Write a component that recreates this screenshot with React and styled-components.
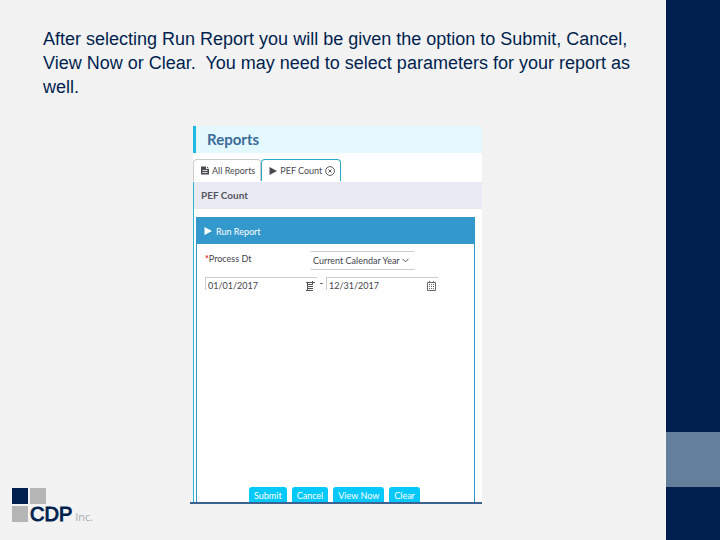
import React, { useState } from 'react'
import styled, { createGlobalStyle } from 'styled-components'

const GlobalStyle = createGlobalStyle`
  * {
    box-sizing: border-box;
  }
  body {
    margin: 0;
    background: #f2f2f2;
    font-family: Lato, sans-serif;
  }
`

const Slide = styled.div`
  display: flex;
  min-height: 100vh;
`

const Main = styled.main`
  flex: 1;
  display: flex;
  flex-direction: column;
  padding: 27px 12px 18px;
  background-image:
    repeating-linear-gradient(90deg, #ffffff18 0 1px, transparent 1px 4px),
    repeating-linear-gradient(#ffffff18 0 1px, transparent 1px 4px);
`

const Sidebar = styled.aside`
  width: 54px;
  display: flex;
  flex-direction: column;
  background: #001f4f;
`

const Band = styled.div`
  height: 55px;
  margin-top: 80vh;
  background: #647f9b;
`

const Title = styled.h1`
  margin: 0 0 27px 31px;
  font-family: 'Liberation Sans', sans-serif;
  font-size: 18px;
  font-weight: normal;
  line-height: 24px;
  color: #001f4f;
`

const Body = styled.div`
  flex: 1;
  display: grid;
  grid-template-columns: 178px minmax(292px, 45%);
`

const Shot = styled.section`
  align-self: start;
  padding-left: 3px;
  border-bottom: 2px solid #3b6290;
`

const Screen = styled.div`
  background: white;
`

const ScreenTitle = styled.h2`
  margin: 0;
  padding-left: 11px;
  border-left: 3px solid #1fb9e6;
  background: #e4f8ff;
  font-size: 15px;
  line-height: 27px;
  color: #3a6c98;
`

const Tabs = styled.div`
  display: flex;
  height: 29px;
  padding-top: 6px;
`

const Tab = styled.button`
  display: flex;
  align-items: center;
  gap: 3px;
  height: 22px;
  padding: 0 5px 0 7px;
  border: 1px solid ${props => props.$active ? '#2aa9cb' : '#cccccc'};
  border-bottom: none;
  border-radius: 4px 4px 0 0;
  background: white;
  font: 9px Lato, sans-serif;
  color: #4a4a52;
  white-space: nowrap;
`

const Content = styled.div`
  border-left: 1px solid #2fb4d2;
`

const SubTitle = styled.h3`
  margin: 0;
  padding-left: 7px;
  background: #eaeaf4;
  font-size: 10px;
  line-height: 27px;
  color: #55555d;
`

const RunBox = styled.form`
  display: flex;
  flex-direction: column;
  height: 285px;
  margin: 8px 7px 0 2px;
  border: 1px solid #3399cc;
  border-bottom: none;
`

const RunHeader = styled.div`
  display: flex;
  align-items: center;
  gap: 4px;
  height: 26px;
  padding: 0 7px;
  background: #3399cc;
  font-size: 9px;
  color: white;
`

const Row = styled.div`
  display: flex;
  margin-top: 7px;
  padding-left: 8px;
`

const Label = styled.label`
  width: 105px;
  font-size: 9px;
  line-height: 16px;
  color: #44444c;
`

const Required = styled.span`
  font-weight: bold;
  color: #dd2222;
`

const SelectWrapper = styled.div`
  display: flex;
  align-items: center;
  width: 105px;
  height: 19px;
  border-top: 1px solid #cccccc;
  border-bottom: 1px solid #cccccc;
  border-radius: 2px;
`

const Select = styled.select`
  appearance: none;
  width: 92px;
  padding: 0 0 0 3px;
  border: none;
  background: transparent;
  font: 9px Lato, sans-serif;
  color: #44444c;
`

const DateBox = styled.div`
  display: flex;
  align-items: center;
  width: 112px;
  height: 13px;
  border: solid #cccccc;
  border-width: 1px 0 0 1px;
`

const DateInput = styled.input`
  width: 100px;
  height: 12px;
  padding: 3px 0 0 2px;
  border: none;
  background: transparent;
  font: 9px Lato, sans-serif;
  color: #44444c;
`

const Dash = styled.span`
  width: 9px;
  font-size: 9px;
  line-height: 12px;
  text-align: center;
`

const IconButton = styled.button`
  display: flex;
  padding: 3px 0 0;
  border: none;
  background: none;
`

const Actions = styled.div`
  display: flex;
  gap: 5px;
  margin-top: auto;
  padding-left: 52px;
`

const Action = styled.button`
  height: 15px;
  padding: 2px 5px 0;
  border: none;
  border-radius: 3px 3px 0 0;
  background: #05c8fa;
  font: 9px Lato, sans-serif;
  color: white;
  white-space: nowrap;
`

const Logo = styled.div`
  display: grid;
  grid-template-columns: 16px 16px;
  grid-template-rows: 16px 16px;
  gap: 2px;
  align-self: end;
`

const Square = styled.div`
  background: ${props => props.$color || '#b5b5b5'};
`

const LogoText = styled.div`
  display: flex;
  align-items: baseline;
  gap: 3px;
  font-family: 'Liberation Sans', sans-serif;
  font-size: 20px;
  line-height: 16px;
  color: #001f4f;
  -webkit-text-stroke: 1px #001f4f;
`

const LogoSuffix = styled.span`
  font: 11px 'Open Sans', sans-serif;
  line-height: 16px;
  color: #aaaaaa;
  -webkit-text-stroke: 0;
`

const Play = () => (
  <svg width="8" height="8" viewBox="0 0 8 8">
    <path d="M0.5 0 L8 4 L0.5 8 Z" fill="currentColor" />
  </svg>
)

const FileIcon = () => (
  <svg width="8" height="9" viewBox="0 0 8 9">
    <path d="M0 0.5 H5 V3 H8 V8.5 H0 Z M6 0.5 L8 2.2 H6 Z" fill="currentColor" />
    <path d="M1.5 4.5 H6.5 M1.5 6.5 H6.5" stroke="white" strokeWidth="0.8" />
  </svg>
)

const CloseIcon = () => (
  <svg width="10" height="10" viewBox="0 0 10 10" fill="none" stroke="currentColor" strokeWidth="0.9">
    <circle cx="5" cy="5" r="4.4" />
    <path d="M3.5 3.5 L6.5 6.5 M6.5 3.5 L3.5 6.5" />
  </svg>
)

const Chevron = () => (
  <svg width="7" height="5" viewBox="0 0 7 5" fill="none" stroke="#55555d">
    <path d="M0.5 0.8 L3.5 3.8 L6.5 0.8" />
  </svg>
)

const ListIcon = () => (
  <svg width="9" height="10" viewBox="0 0 9 10" fill="none" stroke="#555555">
    <path d="M0 1.5 H9 M1 3.5 H7 M1 5.5 H7 M1 7.5 H7 M0 9.5 H7 M1.5 1 V9 M6.5 0 V4" />
  </svg>
)

const CalendarIcon = () => (
  <svg width="9" height="10" viewBox="0 0 9 10" fill="none" stroke="#666666">
    <path d="M0.5 1.5 H8.5 V9.5 H0.5 Z M2.5 0 V2 M6.5 0 V2" />
    <path d="M2 3.5 H8 M2 5.5 H8 M2 7.5 H8" strokeDasharray="1 1" />
  </svg>
)

function App() {
  const [from, setFrom] = useState('01/01/2017')
  const [to, setTo] = useState('12/31/2017')

  return (
    <Slide>
      <GlobalStyle />
      <Main>
        <Title>
          After selecting Run Report you will be given the option to Submit, Cancel,<br />
          View Now or Clear.&nbsp; You may need to select parameters for your report as<br />
          well.
        </Title>

        <Body>
          <Logo>
            <Square $color="#001f4f" />
            <Square />
            <Square />
            <LogoText>CDP<LogoSuffix>Inc.</LogoSuffix></LogoText>
          </Logo>

          <Shot>
            <Screen>
              <ScreenTitle>Reports</ScreenTitle>
              <Tabs>
                <Tab type="button"><FileIcon /> All Reports</Tab>
                <Tab type="button" $active><Play /> PEF Count <CloseIcon /></Tab>
              </Tabs>
              <Content>
                <SubTitle>PEF Count</SubTitle>
                <RunBox onSubmit={e => e.preventDefault()}>
                  <RunHeader><Play /> Run Report</RunHeader>
                  <Row>
                    <Label htmlFor="process"><Required>*</Required>Process Dt</Label>
                    <SelectWrapper>
                      <Select id="process">
                        <option>Current Calendar Year</option>
                      </Select>
                      <Chevron />
                    </SelectWrapper>
                  </Row>
                  <Row>
                    <DateBox>
                      <DateInput aria-label="From" value={from} onChange={e => setFrom(e.target.value)} />
                      <IconButton type="button" aria-label="Pick from date"><ListIcon /></IconButton>
                    </DateBox>
                    <Dash>-</Dash>
                    <DateBox>
                      <DateInput aria-label="To" value={to} onChange={e => setTo(e.target.value)} />
                      <IconButton type="button" aria-label="Pick to date"><CalendarIcon /></IconButton>
                    </DateBox>
                  </Row>
                  <Actions>
                    <Action type="submit">Submit</Action>
                    <Action type="button">Cancel</Action>
                    <Action type="button">View Now</Action>
                    <Action type="button">Clear</Action>
                  </Actions>
                </RunBox>
              </Content>
            </Screen>
          </Shot>
        </Body>
      </Main>
      <Sidebar>
        <Band />
      </Sidebar>
    </Slide>
  )
}

export default App
